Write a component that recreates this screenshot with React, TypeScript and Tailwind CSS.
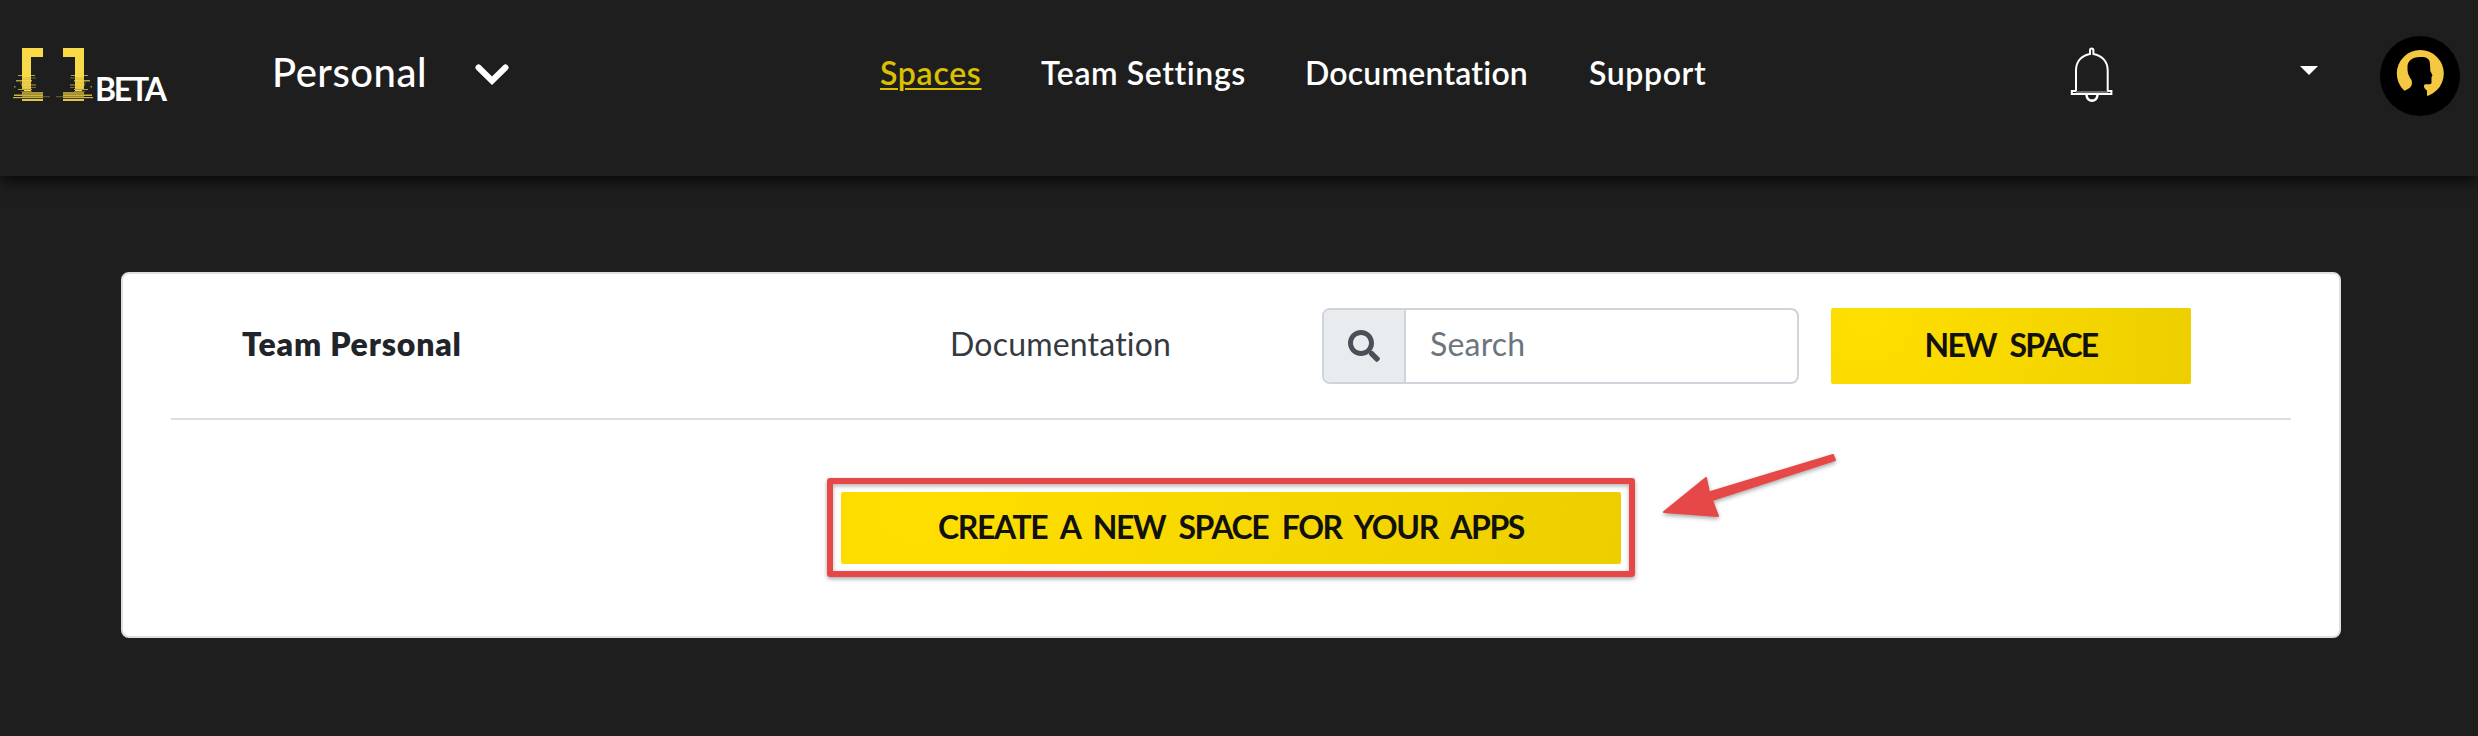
import React from "react";
import { FaSearch } from "react-icons/fa";

const glitch: [number, number, number, number][] = [
  [18, 75, 17, 1], [22, 77.5, 14, 1], [16, 80, 16, 1.5], [20, 82.5, 11, 1], [21, 84.5, 15, 1], [23, 87, 13, 1],
  [18, 89, 14, 1], [21, 91, 11, 1],
];

function Bracket() {
  return (
    <g fill="#f8d948">
      <path d="M22 48h21v9h-12v20h-9z" />
      <path d="M22 77h9v12h-9z" opacity="0.9" />
      <path d="M24 90h7v1.200h-7z" />
      {glitch.map(([x, y, w, h], i) => (
        <rect key={i} x={x} y={y} width={w} height={h} opacity={i % 2 ? 0.4 : 0.7} />
      ))}
      <rect x="14" y="86" width="1.500" height="1.500" opacity="0.6" />
      <rect x="22" y="92" width="21" height="2.500" opacity="0.65" />
      <rect x="14" y="94.500" width="29" height="1.500" opacity="0.8" />
      <rect x="22" y="96" width="21" height="1" opacity="0.55" />
      <rect x="13" y="97" width="30" height="1.200" opacity="0.8" />
      <rect x="43" y="96" width="7" height="1.200" opacity="0.3" />
      <rect x="22" y="99" width="21" height="2" opacity="0.9" />
    </g>
  );
}

function Logo() {
  return (
    <svg className="block h-[70px] w-[95px]" viewBox="0 40 95 70">
      <Bracket />
      <g transform="translate(106 0) scale(-1 1)">
        <Bracket />
      </g>
    </svg>
  );
}

function Bell() {
  return (
    <svg className="block h-[56px] w-[44px]" viewBox="2070 47 44 56" fill="none" stroke="#fff">
      <path strokeWidth="2" d="M2076 91V70.500c0-9.500 6-15.200 14-16.600V50.500c0-2.600 3.400-2.600 3.400 0v3.400c8 1.400 14.300 7.100 14.300 16.600V91" />
      <path strokeWidth="2" d="M2076 91h-4.200v3h39.600v-3h-4" />
      <path strokeWidth="1" opacity=".7" d="M2076 92h32" />
      <path strokeWidth="2.600" d="M2086.500 95c.6 7.500 10.400 7.500 11 0" />
    </svg>
  );
}

function Avatar() {
  return (
    <svg className="block size-20" viewBox="0 0 80 80">
      <circle cx="40" cy="40" r="40" fill="#000" />
      <circle cx="40.300" cy="37.500" r="23.500" fill="#f5c842" />
      <path
        fill="#000"
        d="M14 64 L25 54.500 C31 52 33 49 31.500 44 C28 39 27.500 36 27.500 32 C27 25 32 21 40 21 C45 20.500 50 22 50 28 L50.300 35 L52.500 39.300 L51.500 41 L51.500 47 C51 49 47 48 44.500 48.500 C43 51 45 53 47 54.500 L47 60 L52 66 L40 74 Z"
      />
    </svg>
  );
}

function Header() {
  return (
    <header className="relative flex h-[176px] items-start bg-[#1e1e1e] text-white shadow-[0_5px_14px_rgba(0,0,0,0.75)]">
      <div className="flex w-[272px] pt-10">
        <Logo />
        <span className="pt-[27px] text-[32px] leading-[44px] font-bold tracking-[-2.2px]">BETA</span>
      </div>
      <button className="flex w-[608px] items-start pt-[46px]">
        <span className="w-[203px] text-left text-[40px] leading-[52px] font-medium tracking-[0.5px]">Personal</span>
        <svg className="mt-[17px] h-[24px] w-[34px]" viewBox="0 0 34 24" fill="none">
          <path d="M3.500 4.500 17 17.700 30.500 4.500" stroke="#fff" strokeWidth="6" strokeLinecap="round" />
        </svg>
      </button>
      <nav className="flex w-[1190px] pt-[52px] text-[32px] leading-[42px] font-semibold whitespace-nowrap">
        <a className="w-[161px] tracking-[0.7px] text-[#dcc000] underline decoration-2 underline-offset-[3px]">Spaces</a>
        <a className="w-[264px] tracking-[0.6px]">Team Settings</a>
        <a className="w-[284px] tracking-[0.2px]">Documentation</a>
        <a className="tracking-[0.6px]">Support</a>
      </nav>
      <div className="flex">
        <div className="w-[230px] pt-[47px]">
          <Bell />
        </div>
        <div className="w-20 pt-[66px]">
          <svg className="block h-[9px] w-[18px]" viewBox="0 0 18 9">
            <path fill="#fff" d="M0 0h18l-9 9z" />
          </svg>
        </div>
        <div className="pt-9">
          <Avatar />
        </div>
      </div>
    </header>
  );
}

const yellow = "bg-[radial-gradient(circle_farthest-corner_at_10%_12%,#ffdf00_0%,#edcf00_100%)]";

export default function App() {
  return (
    <div className="h-[736px] w-[2478px] overflow-hidden bg-[#1e1e1e] font-['Lato',sans-serif] [font-variant-ligatures:none]">
      <Header />
      <main className="mt-[96px] ml-[121px] h-[366px] w-[2220px] rounded-lg border-2 border-[#dfdfdf] bg-white px-12">
        <div className="flex h-[146px] items-start border-b-2 border-[#dedede] pt-[34px] pl-[71px] text-[32px] leading-[72px] whitespace-nowrap">
          <h1 className="w-[708px] font-extrabold tracking-[0.8px] text-[#212529]">Team Personal</h1>
          <a className="w-[372px] tracking-[0.2px] text-[#343a40]">Documentation</a>
          <div className="mr-8 flex h-[76px] w-[477px] rounded-lg border-2 border-[#ced4da] text-[#6c757d]">
            <div className="flex w-[82px] items-center justify-center rounded-l-md border-r-2 border-[#ced4da] bg-[#e9ecef]">
              <FaSearch className="size-8 text-[#495057]" />
            </div>
            <span className="pl-6 leading-[68px] tracking-[0.2px]">Search</span>
          </div>
          <button className={`h-[76px] w-[360px] rounded-[2px] pb-[3px] text-center font-bold tracking-[-1.8px] text-[#111] [word-spacing:8px] ${yellow}`}>
            NEW SPACE
          </button>
        </div>
        <div className="relative flex justify-center pt-[58px]">
          <div className="flex h-[99px] w-[808px] items-center justify-center rounded-[3px] border-6 border-[#e64848] shadow-[0_2px_4px_rgba(0,0,0,0.35),inset_0_2px_4px_rgba(0,0,0,0.3)]">
            <button className={`h-[72px] w-[780px] rounded-[2px] pb-[2px] text-center text-[32px] leading-[70px] font-bold tracking-[-1.4px] whitespace-nowrap text-[#111] [word-spacing:7px] ${yellow}`}>
              CREATE A NEW SPACE FOR YOUR APPS
            </button>
          </div>
          <svg className="absolute top-[20px] left-[1480px] h-[100px] w-[200px] drop-shadow-[0_2px_2px_rgba(0,0,0,0.35)]" viewBox="1651 440 200 100">
            <path fill="#e64848" stroke="#e64848" strokeWidth="2" strokeLinejoin="round" d="M1664 512 1706 478 1709 492.500 1833 455 1835 460 1712 500 1718 516Z" />
          </svg>
        </div>
      </main>
    </div>
  );
}
